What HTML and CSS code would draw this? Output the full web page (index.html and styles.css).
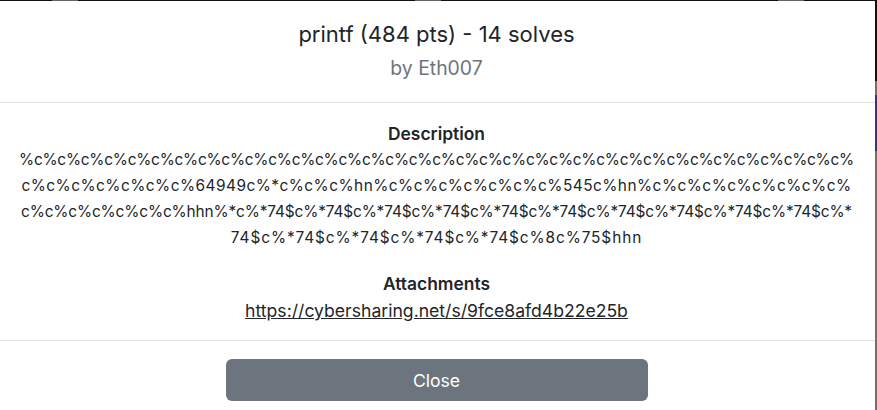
FILE: index.html
```html
<!DOCTYPE html>
<html lang="en">
<head>
<meta charset="utf-8">
<title>printf</title>
<link rel="stylesheet" href="styles.css">
</head>
<body>
<div class="topbar"></div>
<div class="stage">
  <div class="modal">
    <header class="modal-header">
      <h5 class="modal-title">printf (484 pts) - 14 solves</h5>
      <div class="author">by Eth007</div>
    </header>
    <section class="modal-body">
      <div class="label">Description</div>
      <p class="desc"><span class="ln ln1">%c%c%c%c%c<!---->%c%c%c%c%c<!---->%c%c%c%c%c<!---->%c%c%c%c%c<!---->%c%c%c%c%c<!---->%c%c%c%c%c<!---->%c%c%c%c%c<!---->%</span><span class="ln ln2">c<!---->%c%c%c%c%c<!---->%c<!---->%64949c%*c%c%c%hn<!---->%c%c%c%c%c<!---->%c%c<!---->%545c%hn<!---->%c%c%c%c%c<!---->%c%c%c<!---->%</span><span class="ln ln3">c<!---->%c%c%c%c%c<!---->%c<!---->%hhn%*c<!---->%*74$c<!---->%*74$c<!---->%*74$c<!---->%*74$c<!---->%*74$c<!---->%*74$c<!---->%*74$c<!---->%*74$c<!---->%*74$c<!---->%*74$c<!---->%*</span><span class="ln ln4">74$c<!---->%*74$c<!---->%*74$c<!---->%*74$c<!---->%*74$c<!---->%8c%75$hhn</span></p>
      <div class="label attach">Attachments</div>
      <a class="link" href="#">https://cybersharing.net/s/9fce8afd4b22e25b</a>
    </section>
    <footer class="modal-footer">
      <button class="btn-close">Close</button>
    </footer>
  </div>
  <div class="edge"></div>
</div>
</body>
</html>
```

FILE: styles.css
```css
html, body {
  margin: 0;
  padding: 0;
}
body {
  background: #111;
  font-family: Inter, "Noto Sans", sans-serif;
  color: #212529;
  width: 877px;
  height: 410px;
  overflow: hidden;
}
.topbar {
  height: 1px;
  background:
    linear-gradient(to right,
      #111 0, #111 52px, #666 52px, #666 78px, #111 78px,
      #111 415px, #666 415px, #666 441px, #111 441px,
      #111 778px, #666 778px, #666 804px, #111 804px);
}
.stage {
  display: flex;
  height: 409px;
}
.modal {
  width: 875px;
  background: #fff;
  display: flex;
  flex-direction: column;
}
.edge {
  width: 2px;
  background: linear-gradient(to bottom,
    #111 0, #111 80px, #6e6e6e 80px, #6e6e6e 94px,
    #1d3c8c 94px, #1d3c8c 150px, #6f6f6f 150px);
}
.modal-header {
  text-align: center;
  padding: 18px 18px 21px 16px;
  border-bottom: 1px solid #dee2e6;
}
.modal-title {
  margin: 0;
  font-size: 22px;
  font-weight: 400;
  line-height: 30px;
}
.author {
  margin-top: 6px;
  font-size: 19.4px;
  line-height: 26px;
  color: #6c757d;
}
.modal-body {
  text-align: center;
  padding: 19px 18px 16px 16px;
  border-bottom: 1px solid #dee2e6;
}
.label {
  font-weight: 600;
  font-size: 17.4px;
  line-height: 24px;
}
.attach {
  margin-top: 21px;
}
.desc {
  margin: 1px -8px 0;
  font-size: 15.4px;
  line-height: 26px;
  white-space: nowrap;
}
.ln {
  display: block;
}
.ln1 { letter-spacing: -0.24px; }
.ln2 { letter-spacing: 0.48px; }
.ln3 { letter-spacing: -0.13px; }
.ln4 { letter-spacing: 0.9px; }
.link {
  display: block;
  width: max-content;
  margin: 2px auto 0;
  font-size: 17.6px;
  line-height: 26px;
  color: #212529;
  text-decoration: underline;
}
.modal-footer {
  display: flex;
  justify-content: center;
  padding: 18px 2px 0 0;
}
.btn-close {
  width: 422px;
  height: 42px;
  border: 0;
  border-radius: 6px;
  background: #6c757d;
  color: #fff;
  font-family: Inter, "Noto Sans", sans-serif;
  font-size: 17.6px;
  cursor: pointer;
}
```
